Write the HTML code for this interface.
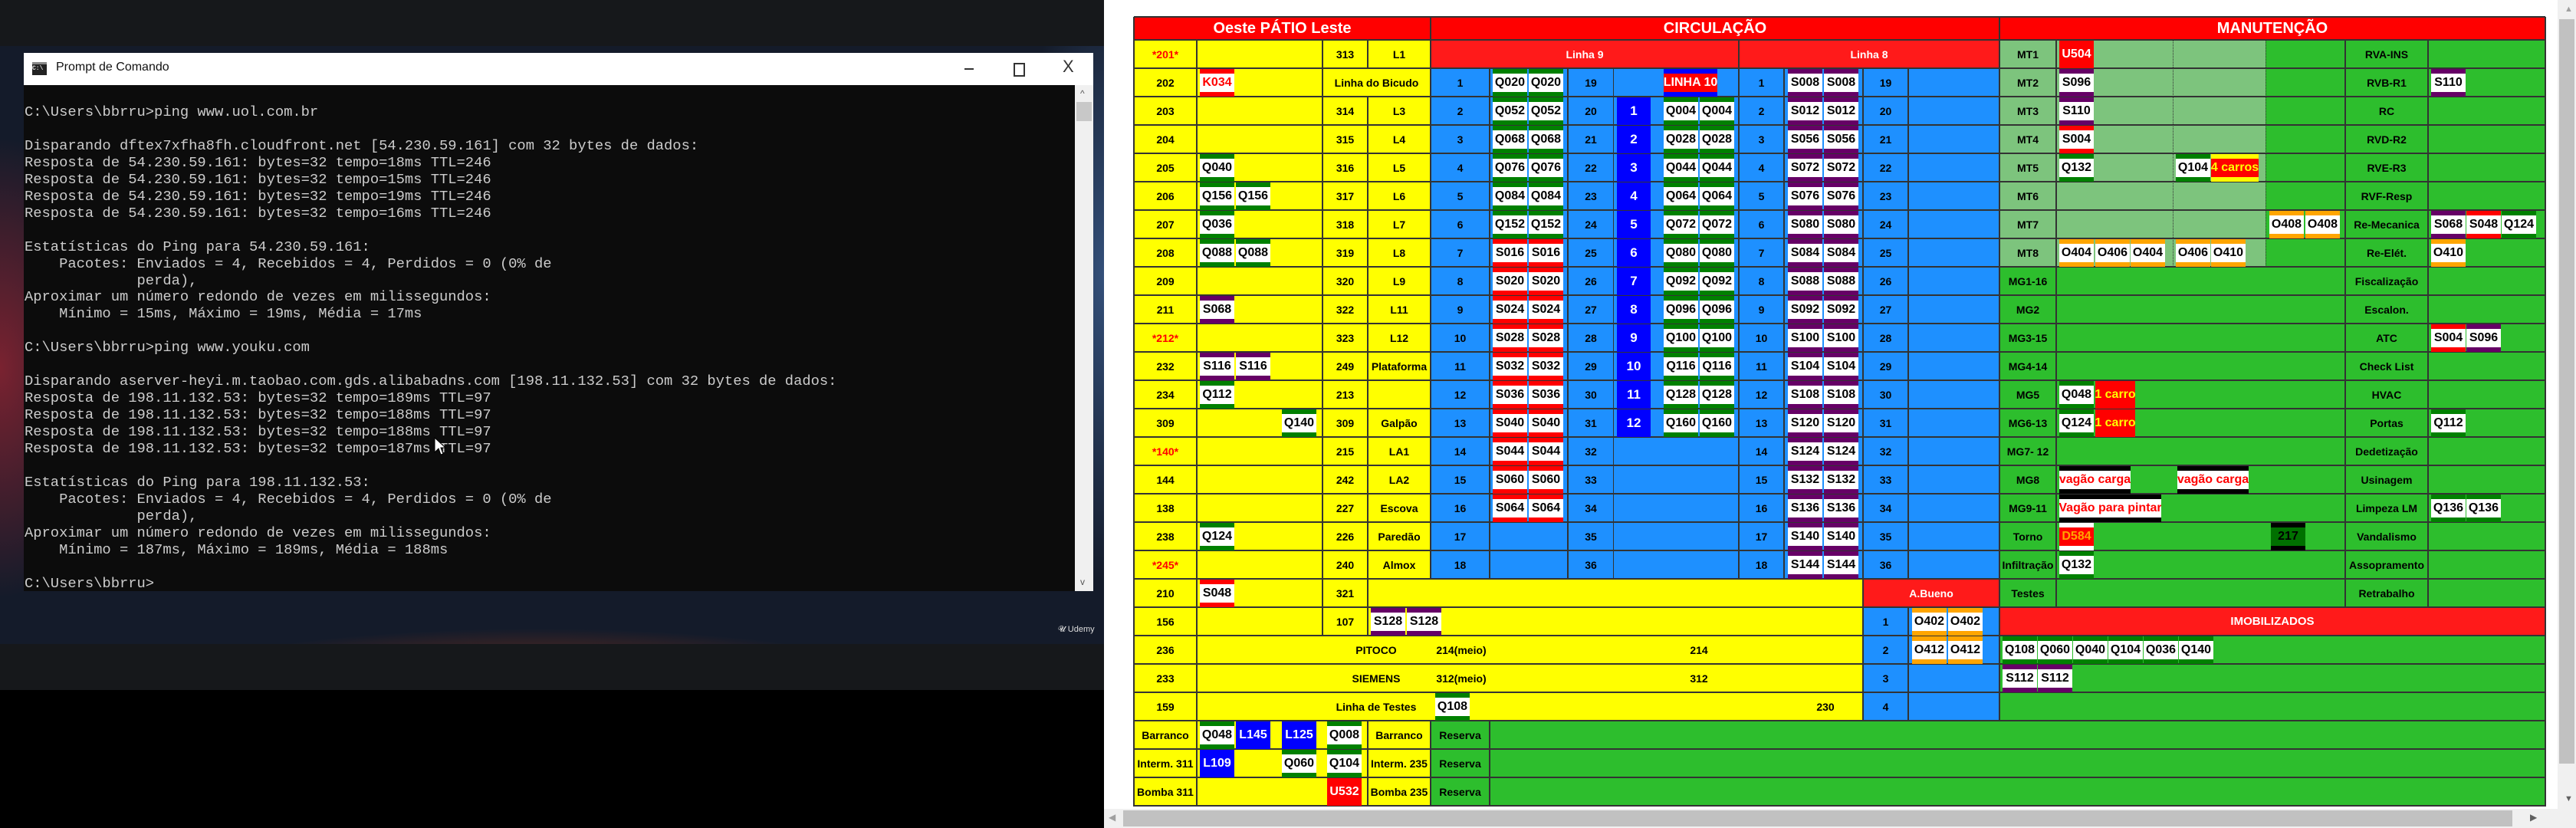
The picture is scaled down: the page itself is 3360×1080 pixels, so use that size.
<!DOCTYPE html>
<html><head><meta charset="utf-8">
<style>
*{margin:0;padding:0}
body{width:3360px;height:1080px;position:relative;overflow:hidden;background:#000;font-family:"Liberation Sans",sans-serif}
.a{position:absolute}
.t{position:absolute;height:37px;display:flex;align-items:center;justify-content:center;font:bold 14px "Liberation Sans",sans-serif;color:#000;white-space:nowrap}
.k{position:absolute;width:45px;height:36px;box-sizing:border-box;background:#fff;border-top:6px solid;border-bottom:6px solid;display:flex;align-items:center;justify-content:center;font:bold 16px "Liberation Sans",sans-serif;color:#000;white-space:nowrap;overflow:hidden}
.g{border-color:#008000}.p{border-color:#660066}.r{border-color:#ff0000}.o{border-color:#ffa500}.bk{border-color:#000}
.h{position:absolute;left:1479px;width:1841px;height:2px;background:#333}
.v{position:absolute;width:2px;background:#333}
.w{color:#fff}.rd{color:#f00}
.bx{position:absolute;width:44px;height:36px;background:#0000ff;color:#fff;display:flex;align-items:center;justify-content:center;font:bold 17px "Liberation Sans",sans-serif}
pre{position:absolute;left:32px;top:136px;font:18.8px/21.95px "Liberation Mono",monospace;color:#cccccc}
</style></head><body>

<!-- LEFT: desktop -->
<div class="a" style="left:0;top:0;width:1440px;height:60px;background:#16181b"></div>
<div class="a" style="left:0;top:60px;width:1440px;height:780px;background:radial-gradient(ellipse 160px 300px at 0px 420px,#7a2230,transparent),radial-gradient(ellipse 500px 80px at 700px 840px,#8a3518,transparent),radial-gradient(ellipse 120px 400px at 1440px 300px,#34507a,transparent),#141b2a"></div>
<div class="a" style="left:0;top:840px;width:1440px;height:60px;background:#16181b"></div>
<div class="a" style="left:1380px;top:815px;font:11px 'Liberation Sans';color:#ddd">𝓤 Udemy</div>

<!-- cmd window -->
<div class="a" style="left:31px;top:69px;width:1395px;height:42px;background:#fff;border-bottom:1px solid #ddd"></div>
<div class="a" style="left:42px;top:81px;width:19px;height:17px;background:#222;border-top:3px solid #888;box-sizing:border-box;color:#ddd;font:bold 8px 'Liberation Mono';line-height:12px">C:\</div>
<div class="a" style="left:73px;top:79px;font:16px 'Liberation Sans';color:#111">Prompt de Comando</div>
<div class="a" style="left:1258px;top:89px;width:12px;height:2px;background:#333"></div>
<div class="a" style="left:1322px;top:82px;width:11px;height:14px;border:2px solid #333"></div>
<div class="a" style="left:1386px;top:74px;font:22px 'Liberation Sans';color:#333">X</div>
<div class="a" style="left:31px;top:111px;width:1371px;height:660px;background:#0c0c0c"></div>
<div class="a" style="left:1402px;top:111px;width:24px;height:660px;background:#f0f0f0"></div>
<div class="a" style="left:1404px;top:133px;width:20px;height:25px;background:#c8c8c8"></div>
<div class="a" style="left:1409px;top:115px;font:12px 'Liberation Sans';color:#555">^</div>
<div class="a" style="left:1409px;top:752px;font:12px 'Liberation Sans';color:#555">v</div>
<pre>C:\Users\bbrru&gt;ping www.uol.com.br

Disparando dftex7xfha8fh.cloudfront.net [54.230.59.161] com 32 bytes de dados:
Resposta de 54.230.59.161: bytes=32 tempo=18ms TTL=246
Resposta de 54.230.59.161: bytes=32 tempo=15ms TTL=246
Resposta de 54.230.59.161: bytes=32 tempo=19ms TTL=246
Resposta de 54.230.59.161: bytes=32 tempo=16ms TTL=246

Estatísticas do Ping para 54.230.59.161:
    Pacotes: Enviados = 4, Recebidos = 4, Perdidos = 0 (0% de
             perda),
Aproximar um número redondo de vezes em milissegundos:
    Mínimo = 15ms, Máximo = 19ms, Média = 17ms

C:\Users\bbrru&gt;ping www.youku.com

Disparando aserver-heyi.m.taobao.com.gds.alibabadns.com [198.11.132.53] com 32 bytes de dados:
Resposta de 198.11.132.53: bytes=32 tempo=189ms TTL=97
Resposta de 198.11.132.53: bytes=32 tempo=188ms TTL=97
Resposta de 198.11.132.53: bytes=32 tempo=188ms TTL=97
Resposta de 198.11.132.53: bytes=32 tempo=187ms TTL=97

Estatísticas do Ping para 198.11.132.53:
    Pacotes: Enviados = 4, Recebidos = 4, Perdidos = 0 (0% de
             perda),
Aproximar um número redondo de vezes em milissegundos:
    Mínimo = 187ms, Máximo = 189ms, Média = 188ms

C:\Users\bbrru&gt;</pre>
<svg class="a" style="left:566px;top:570px" width="16" height="26" viewBox="0 0 16 26"><path d="M1 1 L1 20 L6 15 L9 23 L12 22 L9 14 L15 14 Z" fill="#fff" stroke="#000" stroke-width="1"/></svg>

<!-- RIGHT page -->
<div class="a" style="left:1440px;top:0;width:1920px;height:1080px;background:#fff"></div>
<!-- scrollbars -->
<div class="a" style="left:3336px;top:0;width:24px;height:1055px;background:#f0f0f0"></div>
<div class="a" style="left:3338px;top:25px;width:20px;height:971px;background:#c1c1c1"></div>
<div class="a" style="left:3345px;top:6px;font:11px 'Liberation Sans';color:#a0a0a0">▲</div>
<div class="a" style="left:3345px;top:1036px;font:11px 'Liberation Sans';color:#606060">▼</div>
<div class="a" style="left:1440px;top:1055px;width:1920px;height:25px;background:#f0f0f0"></div>
<div class="a" style="left:1465px;top:1057px;width:1812px;height:21px;background:#c1c1c1"></div>
<div class="a" style="left:1446px;top:1059px;font:12px 'Liberation Sans';color:#a0a0a0">◀</div>
<div class="a" style="left:3300px;top:1059px;font:12px 'Liberation Sans';color:#606060">▶</div>

<!-- backgrounds -->
<div class="a" style="left:1479px;top:22px;width:1841px;height:30px;background:#ff0000"></div>
<div class="a" style="left:1479px;top:52px;width:387px;height:999px;background:#ffff00"></div>
<div class="a" style="left:1866px;top:755px;width:564px;height:185px;background:#ffff00"></div>
<div class="a" style="left:1866px;top:52px;width:742px;height:37px;background:#ff1a1a"></div>
<div class="a" style="left:1866px;top:89px;width:742px;height:666px;background:#1e90ff"></div>
<div class="a" style="left:2430px;top:755px;width:178px;height:37px;background:#ff1a1a"></div>
<div class="a" style="left:2430px;top:792px;width:178px;height:148px;background:#1e90ff"></div>
<div class="a" style="left:2608px;top:52px;width:347px;height:296px;background:#7dc47d"></div>
<div class="a" style="left:2955px;top:52px;width:365px;height:296px;background:#2dbe2d"></div>
<div class="a" style="left:2608px;top:348px;width:712px;height:444px;background:#2dbe2d"></div>
<div class="a" style="left:2608px;top:792px;width:712px;height:37px;background:#ff1a1a"></div>
<div class="a" style="left:2608px;top:829px;width:712px;height:111px;background:#2dbe2d"></div>
<div class="a" style="left:1866px;top:940px;width:1454px;height:111px;background:#2dbe2d"></div>

<!-- horizontal lines -->
<div class="h" style="top:21px"></div><div class="h" style="top:51px"></div><div class="h" style="top:88px"></div><div class="h" style="top:125px"></div><div class="h" style="top:162px"></div><div class="h" style="top:199px"></div><div class="h" style="top:236px"></div><div class="h" style="top:273px"></div><div class="h" style="top:310px"></div><div class="h" style="top:347px"></div><div class="h" style="top:384px"></div><div class="h" style="top:421px"></div><div class="h" style="top:458px"></div><div class="h" style="top:495px"></div><div class="h" style="top:532px"></div><div class="h" style="top:569px"></div><div class="h" style="top:606px"></div><div class="h" style="top:643px"></div><div class="h" style="top:680px"></div><div class="h" style="top:717px"></div><div class="h" style="top:754px"></div><div class="h" style="top:791px"></div><div class="h" style="top:828px"></div><div class="h" style="top:865px"></div><div class="h" style="top:902px"></div><div class="h" style="top:939px"></div><div class="h" style="top:976px"></div><div class="h" style="top:1013px"></div><div class="h" style="top:1050px"></div>

<!-- vertical lines -->
<div class="v" style="left:1478px;top:22px;height:1030px"></div>
<div class="v" style="left:3319px;top:22px;height:1030px"></div>
<div class="v" style="left:1865px;top:22px;height:733px"></div>
<div class="v" style="left:1865px;top:940px;height:111px"></div>
<div class="v" style="left:2607px;top:22px;height:918px"></div>
<div class="v" style="left:1560px;top:52px;height:999px"></div>
<div class="v" style="left:1724px;top:52px;height:777px"></div>
<div class="v" style="left:1783px;top:52px;height:37px"></div>
<div class="v" style="left:1783px;top:126px;height:703px"></div>
<div class="v" style="left:1783px;top:940px;height:111px"></div>
<div class="v" style="left:2267px;top:52px;height:703px"></div>
<div class="v" style="left:2681px;top:52px;height:740px"></div>
<div class="v" style="left:3058px;top:52px;height:740px"></div>
<div class="v" style="left:3166px;top:52px;height:740px"></div>
<div class="v" style="left:1942px;top:89px;height:666px"></div>
<div class="v" style="left:1942px;top:940px;height:111px"></div>
<div class="v" style="left:2044px;top:89px;height:666px"></div>
<div class="v" style="left:2104px;top:89px;height:666px;width:1px"></div>
<div class="v" style="left:2326px;top:89px;height:666px"></div>
<div class="v" style="left:2429px;top:89px;height:851px"></div>
<div class="v" style="left:2488px;top:89px;height:666px"></div>
<div class="v" style="left:2488px;top:792px;height:148px"></div>
<div class="a" style="left:2834px;top:52px;height:296px;border-left:1px dotted #333"></div>
<div class="a" style="left:2955px;top:52px;height:296px;border-left:1px dotted #333"></div>

<!-- header -->
<div class="t w" style="left:1479px;top:22px;width:387px;height:30px;font-size:20px">Oeste PÁTIO Leste</div>
<div class="t w" style="left:1866px;top:22px;width:742px;height:30px;font-size:20px">CIRCULAÇÃO</div>
<div class="t w" style="left:2608px;top:22px;width:712px;height:30px;font-size:20px">MANUTENÇÃO</div>
<div class="t w" style="left:1866px;top:52px;width:402px">Linha 9</div>
<div class="t w" style="left:2268px;top:52px;width:340px">Linha 8</div>

<!-- column A -->
<div class="t rd" style="left:1479px;top:52px;width:82px">*201*</div>
<div class="t" style="left:1479px;top:89px;width:82px">202</div>
<div class="t" style="left:1479px;top:126px;width:82px">203</div>
<div class="t" style="left:1479px;top:163px;width:82px">204</div>
<div class="t" style="left:1479px;top:200px;width:82px">205</div>
<div class="t" style="left:1479px;top:237px;width:82px">206</div>
<div class="t" style="left:1479px;top:274px;width:82px">207</div>
<div class="t" style="left:1479px;top:311px;width:82px">208</div>
<div class="t" style="left:1479px;top:348px;width:82px">209</div>
<div class="t" style="left:1479px;top:385px;width:82px">211</div>
<div class="t rd" style="left:1479px;top:422px;width:82px">*212*</div>
<div class="t" style="left:1479px;top:459px;width:82px">232</div>
<div class="t" style="left:1479px;top:496px;width:82px">234</div>
<div class="t" style="left:1479px;top:533px;width:82px">309</div>
<div class="t rd" style="left:1479px;top:570px;width:82px">*140*</div>
<div class="t" style="left:1479px;top:607px;width:82px">144</div>
<div class="t" style="left:1479px;top:644px;width:82px">138</div>
<div class="t" style="left:1479px;top:681px;width:82px">238</div>
<div class="t rd" style="left:1479px;top:718px;width:82px">*245*</div>
<div class="t" style="left:1479px;top:755px;width:82px">210</div>
<div class="t" style="left:1479px;top:792px;width:82px">156</div>
<div class="t" style="left:1479px;top:829px;width:82px">236</div>
<div class="t" style="left:1479px;top:866px;width:82px">233</div>
<div class="t" style="left:1479px;top:903px;width:82px">159</div>
<div class="t" style="left:1479px;top:940px;width:82px">Barranco</div>
<div class="t" style="left:1479px;top:977px;width:82px">Interm. 311</div>
<div class="t" style="left:1479px;top:1014px;width:82px">Bomba 311</div>

<!-- columns C / D -->
<div class="t" style="left:1725px;top:52px;width:59px">313</div><div class="t" style="left:1784px;top:52px;width:82px">L1</div>
<div class="t" style="left:1725px;top:89px;width:141px">Linha do Bicudo</div>
<div class="t" style="left:1725px;top:126px;width:59px">314</div><div class="t" style="left:1784px;top:126px;width:82px">L3</div>
<div class="t" style="left:1725px;top:163px;width:59px">315</div><div class="t" style="left:1784px;top:163px;width:82px">L4</div>
<div class="t" style="left:1725px;top:200px;width:59px">316</div><div class="t" style="left:1784px;top:200px;width:82px">L5</div>
<div class="t" style="left:1725px;top:237px;width:59px">317</div><div class="t" style="left:1784px;top:237px;width:82px">L6</div>
<div class="t" style="left:1725px;top:274px;width:59px">318</div><div class="t" style="left:1784px;top:274px;width:82px">L7</div>
<div class="t" style="left:1725px;top:311px;width:59px">319</div><div class="t" style="left:1784px;top:311px;width:82px">L8</div>
<div class="t" style="left:1725px;top:348px;width:59px">320</div><div class="t" style="left:1784px;top:348px;width:82px">L9</div>
<div class="t" style="left:1725px;top:385px;width:59px">322</div><div class="t" style="left:1784px;top:385px;width:82px">L11</div>
<div class="t" style="left:1725px;top:422px;width:59px">323</div><div class="t" style="left:1784px;top:422px;width:82px">L12</div>
<div class="t" style="left:1725px;top:459px;width:59px">249</div><div class="t" style="left:1784px;top:459px;width:82px">Plataforma</div>
<div class="t" style="left:1725px;top:496px;width:59px">213</div>
<div class="t" style="left:1725px;top:533px;width:59px">309</div><div class="t" style="left:1784px;top:533px;width:82px">Galpão</div>
<div class="t" style="left:1725px;top:570px;width:59px">215</div><div class="t" style="left:1784px;top:570px;width:82px">LA1</div>
<div class="t" style="left:1725px;top:607px;width:59px">242</div><div class="t" style="left:1784px;top:607px;width:82px">LA2</div>
<div class="t" style="left:1725px;top:644px;width:59px">227</div><div class="t" style="left:1784px;top:644px;width:82px">Escova</div>
<div class="t" style="left:1725px;top:681px;width:59px">226</div><div class="t" style="left:1784px;top:681px;width:82px">Paredão</div>
<div class="t" style="left:1725px;top:718px;width:59px">240</div><div class="t" style="left:1784px;top:718px;width:82px">Almox</div>
<div class="t" style="left:1725px;top:755px;width:59px">321</div>
<div class="t" style="left:1725px;top:792px;width:59px">107</div>
<div class="t" style="left:1745px;top:829px;width:100px">PITOCO</div><div class="t" style="left:1872px;top:829px;width:68px">214(meio)</div><div class="t" style="left:2186px;top:829px;width:60px">214</div>
<div class="t" style="left:1745px;top:866px;width:100px">SIEMENS</div><div class="t" style="left:1872px;top:866px;width:68px">312(meio)</div><div class="t" style="left:2186px;top:866px;width:60px">312</div>
<div class="t" style="left:1735px;top:903px;width:120px">Linha de Testes</div><div class="t" style="left:2351px;top:903px;width:60px">230</div>
<div class="t" style="left:1784px;top:940px;width:82px">Barranco</div>
<div class="t" style="left:1784px;top:977px;width:82px">Interm. 235</div>
<div class="t" style="left:1784px;top:1014px;width:82px">Bomba 235</div>
<div class="t" style="left:1866px;top:940px;width:77px">Reserva</div>
<div class="t" style="left:1866px;top:977px;width:77px">Reserva</div>
<div class="t" style="left:1866px;top:1014px;width:77px">Reserva</div>

<!-- column B chips -->
<div class="k r rd" style="left:1565px;top:90px">K034</div>
<div class="k g" style="left:1565px;top:201px">Q040</div>
<div class="k g" style="left:1565px;top:238px">Q156</div><div class="k g" style="left:1612px;top:238px">Q156</div>
<div class="k g" style="left:1565px;top:275px">Q036</div>
<div class="k g" style="left:1565px;top:312px">Q088</div><div class="k g" style="left:1612px;top:312px">Q088</div>
<div class="k p" style="left:1565px;top:386px">S068</div>
<div class="k p" style="left:1565px;top:460px">S116</div><div class="k p" style="left:1612px;top:460px">S116</div>
<div class="k g" style="left:1565px;top:497px">Q112</div>
<div class="k g" style="left:1672px;top:534px">Q140</div>
<div class="k g" style="left:1565px;top:682px">Q124</div>
<div class="k r" style="left:1565px;top:756px">S048</div>
<div class="k p" style="left:1788px;top:793px">S128</div><div class="k p" style="left:1835px;top:793px">S128</div>
<div class="k g" style="left:1872px;top:904px">Q108</div>
<div class="k g" style="left:1565px;top:941px">Q048</div>
<div class="k w" style="left:1612px;top:941px;background:#0000ff;border-color:#0000ff">L145</div>
<div class="k w" style="left:1672px;top:941px;background:#0000ff;border-color:#0000ff">L125</div>
<div class="k g" style="left:1731px;top:941px">Q008</div>
<div class="k w" style="left:1565px;top:978px;background:#0000ff;border-color:#0000ff">L109</div>
<div class="k g" style="left:1672px;top:978px">Q060</div>
<div class="k g" style="left:1731px;top:978px">Q104</div>
<div class="k w" style="left:1731px;top:1015px;background:#ff0000;border-color:#ff0000">U532</div>

<!-- Linha 9 numbers -->
<div class="t" style="left:1866px;top:89px;width:77px">1</div><div class="t" style="left:2045px;top:89px;width:60px">19</div>
<div class="t" style="left:1866px;top:126px;width:77px">2</div><div class="t" style="left:2045px;top:126px;width:60px">20</div>
<div class="t" style="left:1866px;top:163px;width:77px">3</div><div class="t" style="left:2045px;top:163px;width:60px">21</div>
<div class="t" style="left:1866px;top:200px;width:77px">4</div><div class="t" style="left:2045px;top:200px;width:60px">22</div>
<div class="t" style="left:1866px;top:237px;width:77px">5</div><div class="t" style="left:2045px;top:237px;width:60px">23</div>
<div class="t" style="left:1866px;top:274px;width:77px">6</div><div class="t" style="left:2045px;top:274px;width:60px">24</div>
<div class="t" style="left:1866px;top:311px;width:77px">7</div><div class="t" style="left:2045px;top:311px;width:60px">25</div>
<div class="t" style="left:1866px;top:348px;width:77px">8</div><div class="t" style="left:2045px;top:348px;width:60px">26</div>
<div class="t" style="left:1866px;top:385px;width:77px">9</div><div class="t" style="left:2045px;top:385px;width:60px">27</div>
<div class="t" style="left:1866px;top:422px;width:77px">10</div><div class="t" style="left:2045px;top:422px;width:60px">28</div>
<div class="t" style="left:1866px;top:459px;width:77px">11</div><div class="t" style="left:2045px;top:459px;width:60px">29</div>
<div class="t" style="left:1866px;top:496px;width:77px">12</div><div class="t" style="left:2045px;top:496px;width:60px">30</div>
<div class="t" style="left:1866px;top:533px;width:77px">13</div><div class="t" style="left:2045px;top:533px;width:60px">31</div>
<div class="t" style="left:1866px;top:570px;width:77px">14</div><div class="t" style="left:2045px;top:570px;width:60px">32</div>
<div class="t" style="left:1866px;top:607px;width:77px">15</div><div class="t" style="left:2045px;top:607px;width:60px">33</div>
<div class="t" style="left:1866px;top:644px;width:77px">16</div><div class="t" style="left:2045px;top:644px;width:60px">34</div>
<div class="t" style="left:1866px;top:681px;width:77px">17</div><div class="t" style="left:2045px;top:681px;width:60px">35</div>
<div class="t" style="left:1866px;top:718px;width:77px">18</div><div class="t" style="left:2045px;top:718px;width:60px">36</div>

<!-- Linha 9 chips -->
<div class="k g" style="left:1947px;top:90px">Q020</div><div class="k g" style="left:1994px;top:90px">Q020</div>
<div class="k g" style="left:1947px;top:127px">Q052</div><div class="k g" style="left:1994px;top:127px">Q052</div>
<div class="k g" style="left:1947px;top:164px">Q068</div><div class="k g" style="left:1994px;top:164px">Q068</div>
<div class="k g" style="left:1947px;top:201px">Q076</div><div class="k g" style="left:1994px;top:201px">Q076</div>
<div class="k g" style="left:1947px;top:238px">Q084</div><div class="k g" style="left:1994px;top:238px">Q084</div>
<div class="k g" style="left:1947px;top:275px">Q152</div><div class="k g" style="left:1994px;top:275px">Q152</div>
<div class="k r" style="left:1947px;top:312px">S016</div><div class="k r" style="left:1994px;top:312px">S016</div>
<div class="k r" style="left:1947px;top:349px">S020</div><div class="k r" style="left:1994px;top:349px">S020</div>
<div class="k r" style="left:1947px;top:386px">S024</div><div class="k r" style="left:1994px;top:386px">S024</div>
<div class="k r" style="left:1947px;top:423px">S028</div><div class="k r" style="left:1994px;top:423px">S028</div>
<div class="k r" style="left:1947px;top:460px">S032</div><div class="k r" style="left:1994px;top:460px">S032</div>
<div class="k r" style="left:1947px;top:497px">S036</div><div class="k r" style="left:1994px;top:497px">S036</div>
<div class="k r" style="left:1947px;top:534px">S040</div><div class="k r" style="left:1994px;top:534px">S040</div>
<div class="k r" style="left:1947px;top:571px">S044</div><div class="k r" style="left:1994px;top:571px">S044</div>
<div class="k r" style="left:1947px;top:608px">S060</div><div class="k r" style="left:1994px;top:608px">S060</div>
<div class="k r" style="left:1947px;top:645px">S064</div><div class="k r" style="left:1994px;top:645px">S064</div>

<!-- Linha 10 -->
<div class="k w" style="left:2170px;top:90px;width:70px;background:#ff0000;border-color:#0000ff">LINHA 10</div>
<div class="bx" style="left:2109px;top:127px">1</div><div class="k g" style="left:2170px;top:127px">Q004</div><div class="k g" style="left:2217px;top:127px">Q004</div>
<div class="bx" style="left:2109px;top:164px">2</div><div class="k g" style="left:2170px;top:164px">Q028</div><div class="k g" style="left:2217px;top:164px">Q028</div>
<div class="bx" style="left:2109px;top:201px">3</div><div class="k g" style="left:2170px;top:201px">Q044</div><div class="k g" style="left:2217px;top:201px">Q044</div>
<div class="bx" style="left:2109px;top:238px">4</div><div class="k g" style="left:2170px;top:238px">Q064</div><div class="k g" style="left:2217px;top:238px">Q064</div>
<div class="bx" style="left:2109px;top:275px">5</div><div class="k g" style="left:2170px;top:275px">Q072</div><div class="k g" style="left:2217px;top:275px">Q072</div>
<div class="bx" style="left:2109px;top:312px">6</div><div class="k g" style="left:2170px;top:312px">Q080</div><div class="k g" style="left:2217px;top:312px">Q080</div>
<div class="bx" style="left:2109px;top:349px">7</div><div class="k g" style="left:2170px;top:349px">Q092</div><div class="k g" style="left:2217px;top:349px">Q092</div>
<div class="bx" style="left:2109px;top:386px">8</div><div class="k g" style="left:2170px;top:386px">Q096</div><div class="k g" style="left:2217px;top:386px">Q096</div>
<div class="bx" style="left:2109px;top:423px">9</div><div class="k g" style="left:2170px;top:423px">Q100</div><div class="k g" style="left:2217px;top:423px">Q100</div>
<div class="bx" style="left:2109px;top:460px">10</div><div class="k g" style="left:2170px;top:460px">Q116</div><div class="k g" style="left:2217px;top:460px">Q116</div>
<div class="bx" style="left:2109px;top:497px">11</div><div class="k g" style="left:2170px;top:497px">Q128</div><div class="k g" style="left:2217px;top:497px">Q128</div>
<div class="bx" style="left:2109px;top:534px">12</div><div class="k g" style="left:2170px;top:534px">Q160</div><div class="k g" style="left:2217px;top:534px">Q160</div>

<!-- Linha 8 -->
<div class="t" style="left:2268px;top:89px;width:59px">1</div><div class="t" style="left:2430px;top:89px;width:59px">19</div><div class="k p" style="left:2332px;top:90px">S008</div><div class="k p" style="left:2379px;top:90px">S008</div>
<div class="t" style="left:2268px;top:126px;width:59px">2</div><div class="t" style="left:2430px;top:126px;width:59px">20</div><div class="k p" style="left:2332px;top:127px">S012</div><div class="k p" style="left:2379px;top:127px">S012</div>
<div class="t" style="left:2268px;top:163px;width:59px">3</div><div class="t" style="left:2430px;top:163px;width:59px">21</div><div class="k p" style="left:2332px;top:164px">S056</div><div class="k p" style="left:2379px;top:164px">S056</div>
<div class="t" style="left:2268px;top:200px;width:59px">4</div><div class="t" style="left:2430px;top:200px;width:59px">22</div><div class="k p" style="left:2332px;top:201px">S072</div><div class="k p" style="left:2379px;top:201px">S072</div>
<div class="t" style="left:2268px;top:237px;width:59px">5</div><div class="t" style="left:2430px;top:237px;width:59px">23</div><div class="k p" style="left:2332px;top:238px">S076</div><div class="k p" style="left:2379px;top:238px">S076</div>
<div class="t" style="left:2268px;top:274px;width:59px">6</div><div class="t" style="left:2430px;top:274px;width:59px">24</div><div class="k p" style="left:2332px;top:275px">S080</div><div class="k p" style="left:2379px;top:275px">S080</div>
<div class="t" style="left:2268px;top:311px;width:59px">7</div><div class="t" style="left:2430px;top:311px;width:59px">25</div><div class="k p" style="left:2332px;top:312px">S084</div><div class="k p" style="left:2379px;top:312px">S084</div>
<div class="t" style="left:2268px;top:348px;width:59px">8</div><div class="t" style="left:2430px;top:348px;width:59px">26</div><div class="k p" style="left:2332px;top:349px">S088</div><div class="k p" style="left:2379px;top:349px">S088</div>
<div class="t" style="left:2268px;top:385px;width:59px">9</div><div class="t" style="left:2430px;top:385px;width:59px">27</div><div class="k p" style="left:2332px;top:386px">S092</div><div class="k p" style="left:2379px;top:386px">S092</div>
<div class="t" style="left:2268px;top:422px;width:59px">10</div><div class="t" style="left:2430px;top:422px;width:59px">28</div><div class="k p" style="left:2332px;top:423px">S100</div><div class="k p" style="left:2379px;top:423px">S100</div>
<div class="t" style="left:2268px;top:459px;width:59px">11</div><div class="t" style="left:2430px;top:459px;width:59px">29</div><div class="k p" style="left:2332px;top:460px">S104</div><div class="k p" style="left:2379px;top:460px">S104</div>
<div class="t" style="left:2268px;top:496px;width:59px">12</div><div class="t" style="left:2430px;top:496px;width:59px">30</div><div class="k p" style="left:2332px;top:497px">S108</div><div class="k p" style="left:2379px;top:497px">S108</div>
<div class="t" style="left:2268px;top:533px;width:59px">13</div><div class="t" style="left:2430px;top:533px;width:59px">31</div><div class="k p" style="left:2332px;top:534px">S120</div><div class="k p" style="left:2379px;top:534px">S120</div>
<div class="t" style="left:2268px;top:570px;width:59px">14</div><div class="t" style="left:2430px;top:570px;width:59px">32</div><div class="k p" style="left:2332px;top:571px">S124</div><div class="k p" style="left:2379px;top:571px">S124</div>
<div class="t" style="left:2268px;top:607px;width:59px">15</div><div class="t" style="left:2430px;top:607px;width:59px">33</div><div class="k p" style="left:2332px;top:608px">S132</div><div class="k p" style="left:2379px;top:608px">S132</div>
<div class="t" style="left:2268px;top:644px;width:59px">16</div><div class="t" style="left:2430px;top:644px;width:59px">34</div><div class="k p" style="left:2332px;top:645px">S136</div><div class="k p" style="left:2379px;top:645px">S136</div>
<div class="t" style="left:2268px;top:681px;width:59px">17</div><div class="t" style="left:2430px;top:681px;width:59px">35</div><div class="k p" style="left:2332px;top:682px">S140</div><div class="k p" style="left:2379px;top:682px">S140</div>
<div class="t" style="left:2268px;top:718px;width:59px">18</div><div class="t" style="left:2430px;top:718px;width:59px">36</div><div class="k p" style="left:2332px;top:719px">S144</div><div class="k p" style="left:2379px;top:719px">S144</div>

<!-- A.Bueno -->
<div class="t w" style="left:2430px;top:755px;width:178px">A.Bueno</div>
<div class="t" style="left:2430px;top:792px;width:59px">1</div><div class="k o" style="left:2494px;top:793px">O402</div><div class="k o" style="left:2541px;top:793px">O402</div>
<div class="t" style="left:2430px;top:829px;width:59px">2</div><div class="k o" style="left:2494px;top:830px">O412</div><div class="k o" style="left:2541px;top:830px">O412</div>
<div class="t" style="left:2430px;top:866px;width:59px">3</div>
<div class="t" style="left:2430px;top:903px;width:59px">4</div>

<!-- Manutenção labels -->
<div class="t" style="left:2608px;top:52px;width:74px">MT1</div><div class="t" style="left:3059px;top:52px;width:108px">RVA-INS</div>
<div class="t" style="left:2608px;top:89px;width:74px">MT2</div><div class="t" style="left:3059px;top:89px;width:108px">RVB-R1</div>
<div class="t" style="left:2608px;top:126px;width:74px">MT3</div><div class="t" style="left:3059px;top:126px;width:108px">RC</div>
<div class="t" style="left:2608px;top:163px;width:74px">MT4</div><div class="t" style="left:3059px;top:163px;width:108px">RVD-R2</div>
<div class="t" style="left:2608px;top:200px;width:74px">MT5</div><div class="t" style="left:3059px;top:200px;width:108px">RVE-R3</div>
<div class="t" style="left:2608px;top:237px;width:74px">MT6</div><div class="t" style="left:3059px;top:237px;width:108px">RVF-Resp</div>
<div class="t" style="left:2608px;top:274px;width:74px">MT7</div><div class="t" style="left:3059px;top:274px;width:108px">Re-Mecanica</div>
<div class="t" style="left:2608px;top:311px;width:74px">MT8</div><div class="t" style="left:3059px;top:311px;width:108px">Re-Elét.</div>
<div class="t" style="left:2608px;top:348px;width:74px">MG1-16</div><div class="t" style="left:3059px;top:348px;width:108px">Fiscalização</div>
<div class="t" style="left:2608px;top:385px;width:74px">MG2</div><div class="t" style="left:3059px;top:385px;width:108px">Escalon.</div>
<div class="t" style="left:2608px;top:422px;width:74px">MG3-15</div><div class="t" style="left:3059px;top:422px;width:108px">ATC</div>
<div class="t" style="left:2608px;top:459px;width:74px">MG4-14</div><div class="t" style="left:3059px;top:459px;width:108px">Check List</div>
<div class="t" style="left:2608px;top:496px;width:74px">MG5</div><div class="t" style="left:3059px;top:496px;width:108px">HVAC</div>
<div class="t" style="left:2608px;top:533px;width:74px">MG6-13</div><div class="t" style="left:3059px;top:533px;width:108px">Portas</div>
<div class="t" style="left:2608px;top:570px;width:74px">MG7- 12</div><div class="t" style="left:3059px;top:570px;width:108px">Dedetização</div>
<div class="t" style="left:2608px;top:607px;width:74px">MG8</div><div class="t" style="left:3059px;top:607px;width:108px">Usinagem</div>
<div class="t" style="left:2608px;top:644px;width:74px">MG9-11</div><div class="t" style="left:3059px;top:644px;width:108px">Limpeza LM</div>
<div class="t" style="left:2608px;top:681px;width:74px">Torno</div><div class="t" style="left:3059px;top:681px;width:108px">Vandalismo</div>
<div class="t" style="left:2608px;top:718px;width:74px">Infiltração</div><div class="t" style="left:3059px;top:718px;width:108px">Assopramento</div>
<div class="t" style="left:2608px;top:755px;width:74px">Testes</div><div class="t" style="left:3059px;top:755px;width:108px">Retrabalho</div>
<div class="t w" style="left:2608px;top:792px;width:712px;font-size:15px">IMOBILIZADOS</div>

<!-- Manutenção chips -->
<div class="k w" style="left:2686px;top:53px;background:#ff0000;border-color:#ff0000">U504</div>
<div class="k p" style="left:2686px;top:90px">S096</div><div class="k p" style="left:3171px;top:90px">S110</div>
<div class="k p" style="left:2686px;top:127px">S110</div>
<div class="k r" style="left:2686px;top:164px">S004</div>
<div class="k g" style="left:2686px;top:201px">Q132</div>
<div class="k g" style="left:2838px;top:201px">Q104</div>
<div class="k" style="left:2884px;top:201px;width:62px;background:#ff0000;border-color:#ffff00;color:#ffff00">4 carros</div>
<div class="k o" style="left:2960px;top:275px">O408</div><div class="k o" style="left:3007px;top:275px">O408</div>
<div class="k p" style="left:3171px;top:275px">S068</div><div class="k r" style="left:3217px;top:275px">S048</div><div class="k g" style="left:3263px;top:275px">Q124</div>
<div class="k o" style="left:2686px;top:312px">O404</div><div class="k o" style="left:2733px;top:312px">O406</div><div class="k o" style="left:2779px;top:312px">O404</div>
<div class="k o" style="left:2838px;top:312px">O406</div><div class="k o" style="left:2884px;top:312px">O410</div>
<div class="k o" style="left:3171px;top:312px">O410</div>
<div class="k r" style="left:3171px;top:423px">S004</div><div class="k p" style="left:3217px;top:423px">S096</div>
<div class="k g" style="left:2686px;top:497px">Q048</div>
<div class="k" style="left:2733px;top:497px;width:52px;background:#ff0000;border-color:#ff0000;color:#ffff00">1 carro</div>
<div class="k g" style="left:2686px;top:534px">Q124</div>
<div class="k" style="left:2733px;top:534px;width:52px;background:#ff0000;border-color:#ff0000;color:#ffff00">1 carro</div>
<div class="k g" style="left:3171px;top:534px">Q112</div>
<div class="k bk rd" style="left:2686px;top:608px;width:93px">vagão carga</div>
<div class="k bk rd" style="left:2840px;top:608px;width:93px">vagão carga</div>
<div class="k bk rd" style="left:2686px;top:645px;width:133px">Vagão para pintar</div>
<div class="k g" style="left:3171px;top:645px">Q136</div><div class="k g" style="left:3217px;top:645px">Q136</div>
<div class="k" style="left:2686px;top:682px;background:#ff0000;border-color:#fff;color:#ffa500">D584</div>
<div class="k bk" style="left:2962px;top:682px;background:#007000">217</div>
<div class="k g" style="left:2686px;top:719px">Q132</div>
<div class="k g" style="left:2612px;top:830px">Q108</div><div class="k g" style="left:2658px;top:830px">Q060</div><div class="k g" style="left:2704px;top:830px">Q040</div><div class="k g" style="left:2750px;top:830px">Q104</div><div class="k g" style="left:2796px;top:830px">Q036</div><div class="k g" style="left:2842px;top:830px">Q140</div>
<div class="k p" style="left:2612px;top:867px">S112</div><div class="k p" style="left:2658px;top:867px">S112</div>

</body></html>
